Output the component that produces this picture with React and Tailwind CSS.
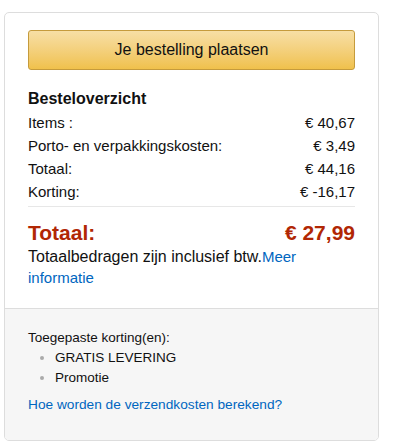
const rows = [
  { label: 'Items :', value: '€ 40,67' },
  { label: 'Porto- en verpakkingskosten:', value: '€ 3,49' },
  { label: 'Totaal:', value: '€ 44,16' },
  { label: 'Korting:', value: '€ -16,17' },
];

const App = () => {
  return (
    <div className="min-h-[441px] bg-white pt-[12px] pl-[4px]" style={{ fontFamily: '"Liberation Sans", Arial, sans-serif' }}>
      <div className="w-[375px] overflow-hidden rounded-[5px] border border-[#dddddd] text-[#111111]">
        <div className="px-[23px] pt-[17px] pb-[20px]">
          <button className="flex h-[40px] w-full items-center justify-center rounded-[3px] border border-[#c59b3c] bg-gradient-to-b from-[#f7dfa5] to-[#f0c14b] text-[16px] text-[#111111]">
            Je bestelling plaatsen
          </button>
          <h2 className="mt-[17px] text-[16px] font-bold leading-[24px] text-[#111111]">Besteloverzicht</h2>
          <div className="mt-[1px]">
            {rows.map((r) => (
              <div key={r.label} className="flex h-[23px] items-center justify-between text-[15px]">
                <span>{r.label}</span>
                <span>{r.value}</span>
              </div>
            ))}
          </div>
          <div className="mt-[2px] border-t border-[#e7e7e7]" />
          <div className="mt-[14px] flex items-center justify-between text-[21px] font-bold leading-[24px] text-[#b12704]">
            <span>Totaal:</span>
            <span>€ 27,99</span>
          </div>
          <p className="mt-[1px] text-[16px] leading-[21px]">
            Totaalbedragen zijn inclusief btw.<a href="#" className="text-[15px] leading-[21px] text-[#0066c0]">Meer informatie</a>
          </p>
        </div>
        <div className="border-t border-[#dddddd] bg-[#f6f6f6] px-[23px] pt-[19px] pb-[25px] text-[13.5px] leading-[20px]">
          <p>Toegepaste korting(en):</p>
          <ul>
            {['GRATIS LEVERING', 'Promotie'].map((t) => (
              <li key={t} className="flex items-center">
                <span className="ml-[12px] mr-[11px] h-[4px] w-[4px] rounded-full bg-[#aaaaaa]" />
                {t}
              </li>
            ))}
          </ul>
          <a href="#" className="mt-[7px] block text-[13.7px] text-[#0066c0]">Hoe worden de verzendkosten berekend?</a>
        </div>
      </div>
    </div>
  );
};

export default App;
